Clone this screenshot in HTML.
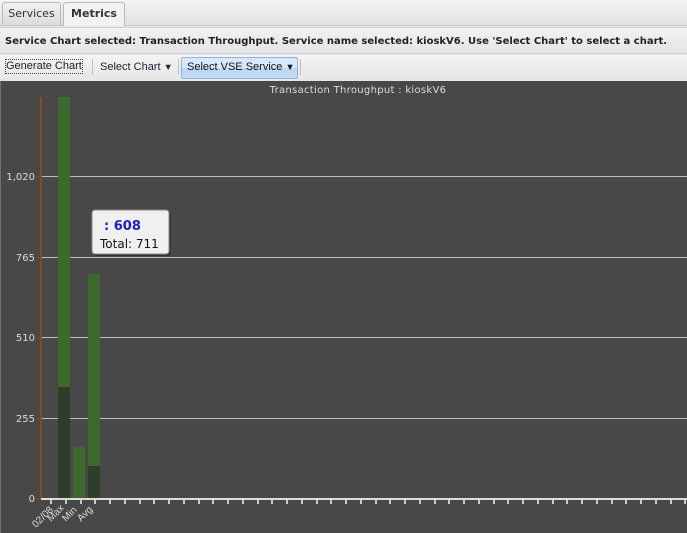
<!DOCTYPE html>
<html><head><style>
body{margin:0;width:687px;height:533px;overflow:hidden;background:#e6e6e6;font-family:"DejaVu Sans","Liberation Sans",sans-serif;}
.tabs{position:absolute;left:0;top:0;width:687px;height:25px;background:linear-gradient(#f4f4f4,#e2e2e2);border-bottom:1px solid #c8c8c8;}
.tab{position:absolute;top:2px;height:22px;border:1px solid #b8b8b8;border-bottom:none;border-radius:3px 3px 0 0;font-size:11px;line-height:21px;text-align:center;color:#333;}
.hdr{position:absolute;left:0;top:27px;width:687px;height:27px;background:linear-gradient(#f2f2f2,#e4e4e4);border-top:1px solid #d0d0d0;border-bottom:1px solid #d0d0d0;font-weight:bold;font-size:10px;line-height:27px;color:#222;padding-left:5px;box-sizing:border-box;white-space:nowrap;overflow:hidden;}
.tb{position:absolute;left:0;top:55px;width:687px;height:26px;background:linear-gradient(#f4f4f4,#e6e6e6);font-family:"Liberation Sans",sans-serif;font-size:11px;color:#222;}
.tb span{position:absolute;top:6px;}
.sep{position:absolute;top:4px;width:1px;height:16px;background:#c0c0c0;}
</style></head><body>
<div class="tabs">
<div class="tab" style="left:2px;width:57px;background:linear-gradient(#f0f0f0,#dcdcdc);">Services</div>
<div class="tab" style="left:63px;width:60px;background:#f2f2f2;font-weight:bold;height:23px;">Metrics</div>
</div>
<div class="hdr">Service Chart selected: Transaction Throughput. Service name selected: kioskV6. Use 'Select Chart' to select a chart.</div>
<div class="tb">
<span style="left:6px;outline:1px dotted #444;line-height:13px;top:5px;">Generate Chart</span>
<div class="sep" style="left:92px"></div>
<span style="left:100px;color:#223">Select Chart <small>▼</small></span>
<div class="sep" style="left:178px"></div>
<div style="position:absolute;left:181px;top:2px;width:115px;height:20px;border:1px solid #8fb3dc;border-radius:2px;background:linear-gradient(#d8e8fa 50%,#b9d3f3 50%,#c8ddf6);"></div>
<span style="left:187px;color:#112">Select VSE Service <small>▼</small></span>
<div class="sep" style="left:300px"></div>
</div>
<svg style="position:absolute;left:0;top:81px" width="687" height="452" viewBox="0 81 687 452">
<rect x="0" y="81" width="687" height="452" fill="#484848"/>
<rect x="0" y="81" width="1" height="452" fill="#707070"/>
<text x="358" y="93" fill="#ddd" font-family="DejaVu Sans,sans-serif" font-size="10" text-anchor="middle" letter-spacing="0.3">Transaction Throughput : kioskV6</text>
<g stroke="#bdbdbd" stroke-width="1">
<line x1="41" y1="176.5" x2="687" y2="176.5"/>
<line x1="41" y1="257.5" x2="687" y2="257.5"/>
<line x1="41" y1="337.5" x2="687" y2="337.5"/>
<line x1="41" y1="418.5" x2="687" y2="418.5"/>
</g>
<g font-family="DejaVu Sans,sans-serif" font-size="10" fill="#ddd" text-anchor="end">
<text x="35" y="180">1,020</text><text x="35" y="261">765</text><text x="35" y="341">510</text><text x="35" y="422">255</text><text x="35" y="502">0</text>
</g>
<rect x="58" y="97" width="12" height="401" fill="#3c6a2c"/>
<rect x="58" y="387" width="12" height="111" fill="#2f3d2b"/>
<rect x="73" y="447" width="12" height="51" fill="#3c6a2c"/>
<rect x="88" y="274" width="12" height="224" fill="#3c6a2c"/>
<rect x="88" y="466" width="12" height="32" fill="#2f3d2b"/>
<rect x="40" y="97" width="2" height="402" fill="#8a4a1a"/>
<g fill="#8a4a1a"><rect x="37" y="176" width="4" height="1"/><rect x="37" y="257" width="4" height="1"/><rect x="37" y="337" width="4" height="1"/><rect x="37" y="418" width="4" height="1"/><rect x="37" y="498" width="4" height="1"/></g>
<rect x="41" y="498" width="646" height="2" fill="#dcdcdc"/>
<g fill="#c8c8c8" id="ticks"></g>
<g font-family="Liberation Sans,sans-serif" font-size="10" fill="#ddd">
<text transform="translate(36,528) rotate(-45)">02/08</text>
<text transform="translate(51,522) rotate(-45)">Max</text>
<text transform="translate(66,522) rotate(-45)">Min</text>
<text transform="translate(81,522) rotate(-45)">Avg</text>
</g>
<rect x="94" y="212" width="77" height="44" rx="3" fill="#2a2a2a" opacity="0.6"/>
<rect x="92" y="210" width="77" height="44" rx="3" fill="#f0f0f0" stroke="#888"/>
<text x="104" y="230" font-family="DejaVu Sans,sans-serif" font-weight="bold" font-size="13" fill="#1c1ccc">: 608</text>
<text x="100" y="248" font-family="DejaVu Sans,sans-serif" font-size="12" fill="#111">Total: 711</text>
</svg>
<script>
var g=document.getElementById('ticks'),s='';
for(var x=50;x<686;x+=14.75){s+='<rect x="'+Math.round(x)+'" y="500" width="2" height="4"/>';}
g.innerHTML=s;
</script>
</body></html>
